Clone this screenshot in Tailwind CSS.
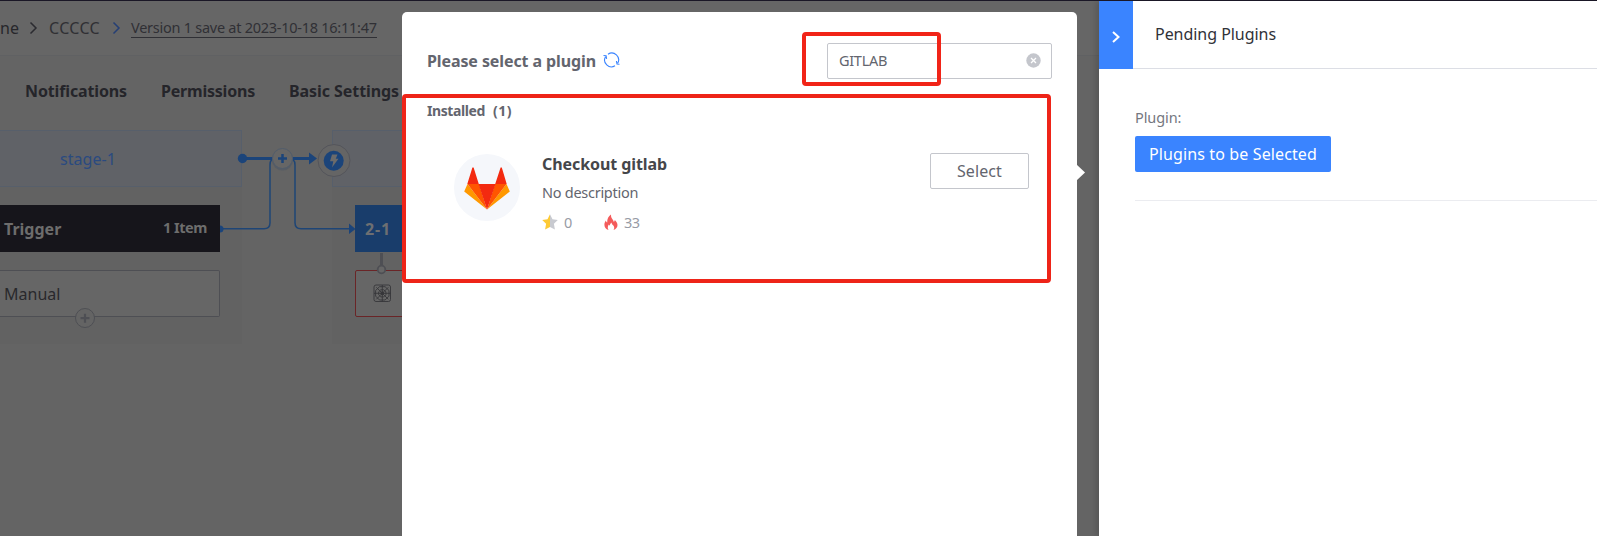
<!DOCTYPE html>
<html lang="en"><head><meta charset="utf-8"><title>Pipeline editor</title>
<script src="https://cdn.jsdelivr.net/npm/@tailwindcss/browser@4"></script></head>
<body class="h-[536px] w-[1597px] overflow-hidden bg-[#646464] font-['Noto_Sans',sans-serif] whitespace-nowrap text-[#27272b]">
<div class="relative h-[536px] w-full overflow-hidden">
  <!-- dimmed pipeline page -->
  <header class="border-t border-[#1a1726] bg-[#666666]">
    <nav class="flex h-[54px] items-center pb-[1px] text-[16px]">
      <span class="w-[17px]">ne</span>
      <svg class="ml-[12px] h-[14px] w-[9px]" viewBox="0 0 9 14" fill="none" stroke="#2b2b30" stroke-width="1.500"><path d="M1.500 1.500 7 7l-5.500 5.500"/></svg>
      <span class="ml-[11px] w-[63px] tracking-[0.34px] text-[#303034]">CCCCC</span>
      <svg class="h-[14px] w-[9px]" viewBox="0 0 9 14" fill="none" stroke="#253f75" stroke-width="1.500"><path d="M1.500 1.500 7 7l-5.500 5.500"/></svg>
      <span class="ml-[10px] h-[20px] border-b border-[#303035] text-[14.5px] leading-[18px] tracking-[-0.260px] text-[#303035]">Version 1 save at 2023-10-18 16:11:47</span>
    </nav>
  </header>
  <nav class="flex h-[72px] items-center border-t border-[#606163] pb-[2px] pl-[25px] text-[16px] font-bold text-[#25252a]">
    <span class="w-[136px] tracking-[-0.13px]">Notifications</span><span class="w-[128px] tracking-[-0.21px]">Permissions</span><span class="tracking-[-0.07px]">Basic Settings</span>
  </nav>

  <!-- pipeline canvas -->
  <section class="absolute top-[130px] left-0 h-[214px] w-[242px] bg-[#626262]">
    <h3 class="h-[57px] border border-l-0 border-[#575f6b] bg-[#606267] pl-[60px] text-[16px] leading-[57px] tracking-[0.06px] text-[#2a4a80]">stage-1</h3>
    <div class="mt-[18px] flex h-[47px] w-[220px] items-center justify-between bg-[#16151b] pr-[13px] pl-[4px] font-bold text-[#6d6d6d]">
      <span class="text-[16px]">Trigger</span><span class="pb-[2px] text-[14.5px] tracking-[-0.450px]">1 Item</span>
    </div>
    <div class="mt-[18px] flex h-[47px] w-[220px] items-center rounded-r-[2px] border border-l-0 border-[#4e4f54] bg-[#666] pl-[4px] text-[16px] text-[#29292c]">Manual</div>
  </section>
  <section class="absolute top-[130px] left-[332px] h-[214px] w-[90px] bg-[#626262]">
    <div class="h-[57px] border border-[#575f6b] bg-[#606267]"></div>
    <div class="mt-[18px] ml-[23px] flex h-[47px] items-center bg-[#193d6b] pl-[10px] text-[16px] font-bold tracking-[0.850px] text-[#6d6f72]">2-1</div>
    <div class="mt-[18px] ml-[23px] h-[47px] rounded-[2px] border border-[#6a2527] bg-[#666]"></div>
  </section>
  <svg class="absolute top-0 left-0" width="410" height="350" viewBox="0 0 410 350" fill="none">
    <g stroke="#1e4576" stroke-width="1.500"><path d="M221 228.800h43q6 0 6-6V165q0-7 6-7"/><path d="M288 158q7 0 7 7v57.800q0 6 6 6h49"/></g>
    <path d="M242 158.500h70" stroke="#1b447a" stroke-width="3"/>
    <circle cx="242.500" cy="158.500" r="4.700" fill="#1b447a"/><path d="M309 152.500l8 6-8 6z M349 223.500l6.500 5.500-6.500 5z" fill="#1b447a"/>
    <path d="M220 225.500a3.500 3.500 0 0 1 0 7z" fill="#1b447a"/>
    <circle cx="282.500" cy="160" r="10.500" fill="#4a5666" opacity=".5"/>
    <circle cx="282.500" cy="158.500" r="10" fill="#666" stroke="#515c6b"/><path d="M282.500 154v9M278 158.500h9" stroke="#1b447a" stroke-width="2.500"/>
    <circle cx="334" cy="160.500" r="16" fill="#656565" stroke="#54555b"/><circle cx="333.700" cy="160.800" r="10" fill="#1b447a"/>
    <path d="M332 154.500h5.500l-1.700 4.200h2.700l-6.500 8.800 1.300-6.300h-3.300z" fill="#6b6b6b"/>
    <circle cx="85" cy="318" r="9.500" fill="#646464" stroke="#4e4f54"/><path d="M85 313.700v9M80.500 318.200h9" stroke="#4e4f54" stroke-width="2.200"/>
    <path d="M381.500 253v12" stroke="#4e4f54" stroke-width="3"/><circle cx="381.500" cy="269.500" r="3.800" fill="#666" stroke="#4e4f54" stroke-width="1.800"/>
    <g stroke="#37373a" stroke-width=".9"><rect x="374" y="285" width="16.500" height="16.500" rx="2"/><circle cx="382.300" cy="293.300" r="1.500" fill="#37373a"/><path d="M380.800 289.800h3l2.100 2v3l-2.100 2.100h-3l-2.100-2.100v-3zM379.500 286.700h5.600l3.900 3.800v5.600l-3.900 3.900h-5.600l-3.900-3.900v-5.600zM382.300 285v16.500M374 293.300h16.500M376.300 287.300l12 12M388.300 287.300l-12 12"/></g>
  </svg>

  <!-- plugin picker -->
  <main class="absolute top-[12px] left-[402px] h-[540px] w-[675px] rounded-[5px] bg-white pt-[31px] pl-[25px] text-[#63656e]">
    <div class="flex h-[36px] w-[625px] items-center">
      <h1 class="text-[16px] font-bold tracking-[-0.1px]">Please select a plugin</h1>
      <svg class="-mt-[2px] ml-[7px] h-[16px] w-[17px]" viewBox="0 0 17 16" fill="none" stroke="#3a84ff" stroke-width="1.100"><path d="M5 2.200A6.800 6.800 0 0 1 14.700 11.200M12 13.800A6.800 6.800 0 0 1 2.500 4.700M.5 3.500l2.600.3.500 3M16.500 12.300l-2.500-.3-.6-3"/></svg>
      <div class="ml-auto flex h-[36px] w-[225px] items-center justify-between rounded-[2px] border border-[#c4c6cc] pr-[10px] pl-[11px] text-[14.5px] tracking-[-0.3px]">
        <span>GITLAB</span>
        <svg class="-mt-[1px] h-[15px] w-[15px]" viewBox="0 0 15 15"><circle cx="7.500" cy="7.500" r="7.200" fill="#c4c6cc"/><path d="M5 5l5 5M10 5l-5 5" stroke="#fff" stroke-width="1.300"/></svg>
      </div>
    </div>
    <h2 class="mt-[22px] h-[20px] text-[14px] leading-[20px] font-bold"><span class="inline-block w-[66px] tracking-[-0.4px]">Installed</span><span class="tracking-[0.5px]">(1)</span></h2>
    <article class="mt-[32px] flex w-[602px] pl-[27px]">
      <div class="mt-[1px] flex h-[67px] w-[66px] items-center justify-center rounded-full bg-[#f5f7fb]">
        <svg class="mt-[2px] h-[43px] w-[46px]" viewBox="0 0 46 43"><path d="M23 42.500 .2 24.500 3.500 17zM23 42.500l22.800-18L42.500 17z" fill="#ff9800"/><path d="M23 42.500 3.500 17H15zM23 42.500 42.500 17H31z" fill="#ff5500"/><path d="M23 42.500 14.500 17h17zM3.300 17 8.400.5h1.200L14.800 17zM42.700 17 37.800.5h-1.200L31.200 17z" fill="#f32a10"/></svg>
      </div>
      <div class="ml-[22px]">
        <h3 class="h-[22px] text-[16px] leading-[22px] font-bold tracking-[-0.08px] text-[#45464a]">Checkout gitlab</h3>
        <p class="mt-[7px] h-[20px] text-[14.5px] leading-[20px] tracking-[-0.27px]">No description</p>
        <div class="mt-[10px] flex h-[20px] items-center text-[14.5px] text-[#979ba5]">
          <svg class="h-[16px] w-[16px]" viewBox="0 0 16 16"><path d="M8 .3 5.500 5.200.2 6l3.900 3.800-1 5.600L8 12.900z" fill="#fdca35"/><path d="M8 .3l2.500 4.900 5.300.8-3.900 3.800 1 5.600L8 12.900z" fill="#c8cad0"/></svg>
          <span class="ml-[6px] w-[40px] pt-[2px]">0</span>
          <svg class="h-[17px] w-[14px]" viewBox="0 0 14 17"><path d="M4.500 16C1.800 15.300.4 13 .4 10.700.4 8.900 1 7.600 1.900 6.400c.2 1.100.6 1.700 1.300 2C3 5 4.500 2.300 7 .5c-.1 2.600.6 3.700 1.800 5.200.6.800 1 1.500 1 2.300.7-.5.900-1.200 1-2 1.700 1.600 2.700 3.200 2.700 5.100 0 2.300-1.500 4.200-4 4.900 1.200-1.800.8-3.500-.4-4.700-.7-.7-1.500-1.700-1.600-2.900-1 .8-1.700 1.900-1.600 3.100-.5-.2-.9-.6-1-1.100-1.300 1.700-1.500 3.600-.4 5.600z" fill="#f45b5b"/></svg>
          <span class="ml-[6px] pt-[2px] tracking-[-0.5px]">33</span>
        </div>
      </div>
      <button class="ml-auto h-[36px] w-[99px] rounded-[2px] border border-[#c4c6cc] pb-px text-[16px] tracking-[0.1px]">Select</button>
    </article>
  </main>
  <svg class="absolute top-[164px] left-[1076px]" width="9" height="17" viewBox="0 0 9 17"><path d="M0 0l9 8.500L0 17z" fill="#fff"/></svg>

  <!-- annotation frames -->
  <div class="absolute top-[32px] left-[802px] h-[54px] w-[139px] rounded-[4px] border-4 border-[#f12418]"></div>
  <div class="absolute top-[94px] left-[402px] h-[189px] w-[649px] rounded-[4px] border-4 border-[#ee2418]"></div>

  <!-- side panel -->
  <aside class="absolute top-px right-0 h-[535px] w-[498px] bg-white shadow-[-3px_0_6px_rgba(0,0,0,0.15)]">
    <header class="flex h-[68px]">
      <div class="flex h-[68px] w-[34px] items-center justify-center bg-[#3a84ff] pt-[3px]"><svg class="h-[12px] w-[8px]" viewBox="0 0 8 12" fill="none" stroke="#fff" stroke-width="2"><path d="M1 1l5.500 5L1 11"/></svg></div>
      <h2 class="h-[68px] flex-1 border-b border-[#dcdee5] pl-[22px] text-[16px] leading-[66px] tracking-[-0.04px] text-[#313238]">Pending Plugins</h2>
    </header>
    <div class="ml-[36px] h-[132px] border-b border-[#ebecf0] pt-[38px]">
      <p class="h-[20px] text-[14.5px] leading-[20px] tracking-[-0.1px] text-[#75777f]">Plugin:</p>
      <button class="mt-[9px] h-[36px] w-[196px] rounded-[2px] bg-[#3a84ff] pb-px text-[16px] tracking-[0.12px] text-white">Plugins to be Selected</button>
    </div>
  </aside>
  <div class="absolute top-0 left-0 h-px w-full bg-[#1a1726]"></div>
</div>
</body></html>
